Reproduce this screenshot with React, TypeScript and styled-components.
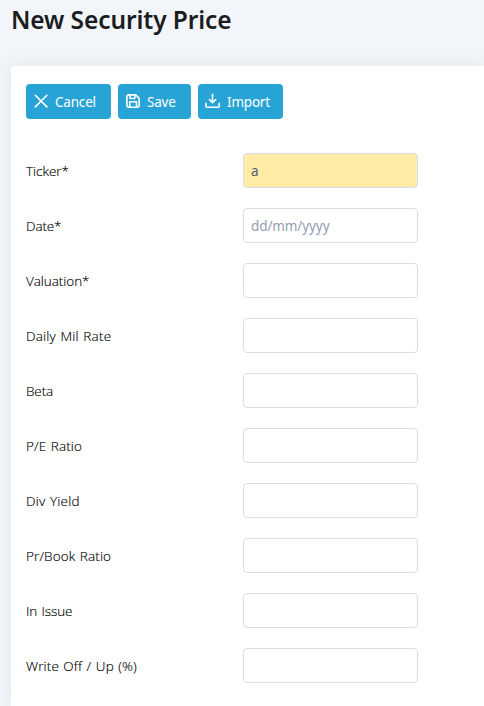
import React from "react";
import styled, { createGlobalStyle } from "styled-components";

const GlobalStyle = createGlobalStyle`
  *, *::before, *::after { box-sizing: border-box; }
  html, body { margin: 0; height: 100%; overflow: hidden; }
  body {
    background: #f2f6fa;
    color: #212429;
    font-family: "Noto Sans", "Open Sans", sans-serif;
    font-size: 14px;
  }
`;

const Page = styled.main`
  display: flex;
  flex-direction: column;
  height: 706px;
  padding-left: 11px;
  overflow: hidden;
`;

const Title = styled.h1`
  margin: 0;
  height: 66px;
  padding-top: 3px;
  color: #1b1d21;
  font-size: 24.5px;
  font-weight: 600;
  line-height: 34px;
  letter-spacing: -0.1px;
  white-space: nowrap;
`;

const Card = styled.section`
  flex: 1;
  padding: 18px 15px 0;
  background: #fff;
  border-top-left-radius: 4px;
  box-shadow: 0 0 20px rgba(100, 130, 150, 0.13);
`;

const Toolbar = styled.div`
  display: flex;
  gap: 7px;
  margin-bottom: 34px;
`;

const Button = styled.button<{ $width: number }>`
  display: flex;
  align-items: center;
  gap: 6px;
  width: ${(p) => p.$width}px;
  height: 35px;
  padding: 0 0 0 7px;
  border: 0;
  border-radius: 4px;
  background: #27a4d5;
  color: #fff;
  font: inherit;
  font-size: 13.5px;
  letter-spacing: -0.2px;
  white-space: nowrap;

  svg { flex: none; margin-top: -2px; }
  span { padding-top: 1px; }
`;

const Form = styled.form`
  display: flex;
  flex-direction: column;
  gap: 20px;
`;

const Row = styled.div`
  display: grid;
  grid-template-columns: 217px 175px;
  align-items: center;
  height: 35px;
`;

const Label = styled.label<{ $tracking: number }>`
  color: #000;
  font-family: "Open Sans", "Noto Sans", sans-serif;
  font-size: 13.5px;
  font-weight: 350;
  line-height: 20px;
  letter-spacing: ${(p) => p.$tracking}px;
  word-spacing: 0.8px;
  white-space: nowrap;
  -webkit-text-stroke: 0.15px #000;
`;

const Input = styled.input<{ $filled?: boolean }>`
  width: 100%;
  height: 35px;
  padding: 0 7px;
  border: 1px solid #d9dde9;
  border-radius: 4px;
  outline: 0;
  background: ${(p) => (p.$filled ? "#ffeca7" : "#fff")};
  color: #525c72;
  font: inherit;
  font-size: 13.5px;
  letter-spacing: -0.1px;

  &::placeholder { color: #929db1; opacity: 1; }
`;

const Icon = ({ children }: { children: React.ReactNode }) => (
  <svg width="16" height="16" viewBox="0 0 16 16" fill="none" stroke="currentColor"
    strokeWidth="1.6" strokeLinecap="round" strokeLinejoin="round">
    {children}
  </svg>
);

const CancelIcon = () => <Icon><path d="M2.3 2.3l11.6 11.6M13.9 2.3L2.3 13.9" /></Icon>;

const SaveIcon = () => (
  <Icon>
    <path d="M3.5 1.9h7.2l3.5 3.5v7.2a1.6 1.6 0 0 1-1.6 1.6H3.5a1.6 1.6 0 0 1-1.6-1.6V3.5a1.6 1.6 0 0 1 1.6-1.6z" />
    <path d="M5 2.2v3.3h4.8V2.2M4.7 14V8.7h6.8V14" />
  </Icon>
);

const ImportIcon = () => (
  <Icon>
    <path d="M7.5 1.3v8.2M4.3 6.5l3.2 3.2 3.2-3.2M.9 10.2v3.1q0 1 1 1h11.3q1 0 1-1v-3.1" />
  </Icon>
);

const fields = [
  { name: "ticker", label: "Ticker*", tracking: -0.05, value: "a" },
  { name: "date", label: "Date*", tracking: -0.15, placeholder: "dd/mm/yyyy" },
  { name: "valuation", label: "Valuation*", tracking: -0.05 },
  { name: "rate", label: "Daily Mil Rate", tracking: 0.2 },
  { name: "beta", label: "Beta", tracking: -0.1 },
  { name: "pe", label: "P/E Ratio", tracking: 0.12 },
  { name: "yield", label: "Div Yield", tracking: 0.22 },
  { name: "book", label: "Pr/Book Ratio", tracking: 0.12 },
  { name: "issue", label: "In Issue", tracking: -0.08 },
  { name: "write", label: "Write Off / Up (%)", tracking: 0.13 },
];

export default function App() {
  return (
    <>
      <GlobalStyle />
      <Page>
        <Title>New Security Price</Title>
        <Card>
          <Toolbar>
            <Button type="button" $width={85}><CancelIcon /><span>Cancel</span></Button>
            <Button type="button" $width={73}><SaveIcon /><span>Save</span></Button>
            <Button type="button" $width={85}><ImportIcon /><span>Import</span></Button>
          </Toolbar>
          <Form>
            {fields.map((f) => (
              <Row key={f.name}>
                <Label htmlFor={f.name} $tracking={f.tracking}>{f.label}</Label>
                <Input id={f.name} defaultValue={f.value} placeholder={f.placeholder} $filled={!!f.value} />
              </Row>
            ))}
          </Form>
        </Card>
      </Page>
    </>
  );
}
